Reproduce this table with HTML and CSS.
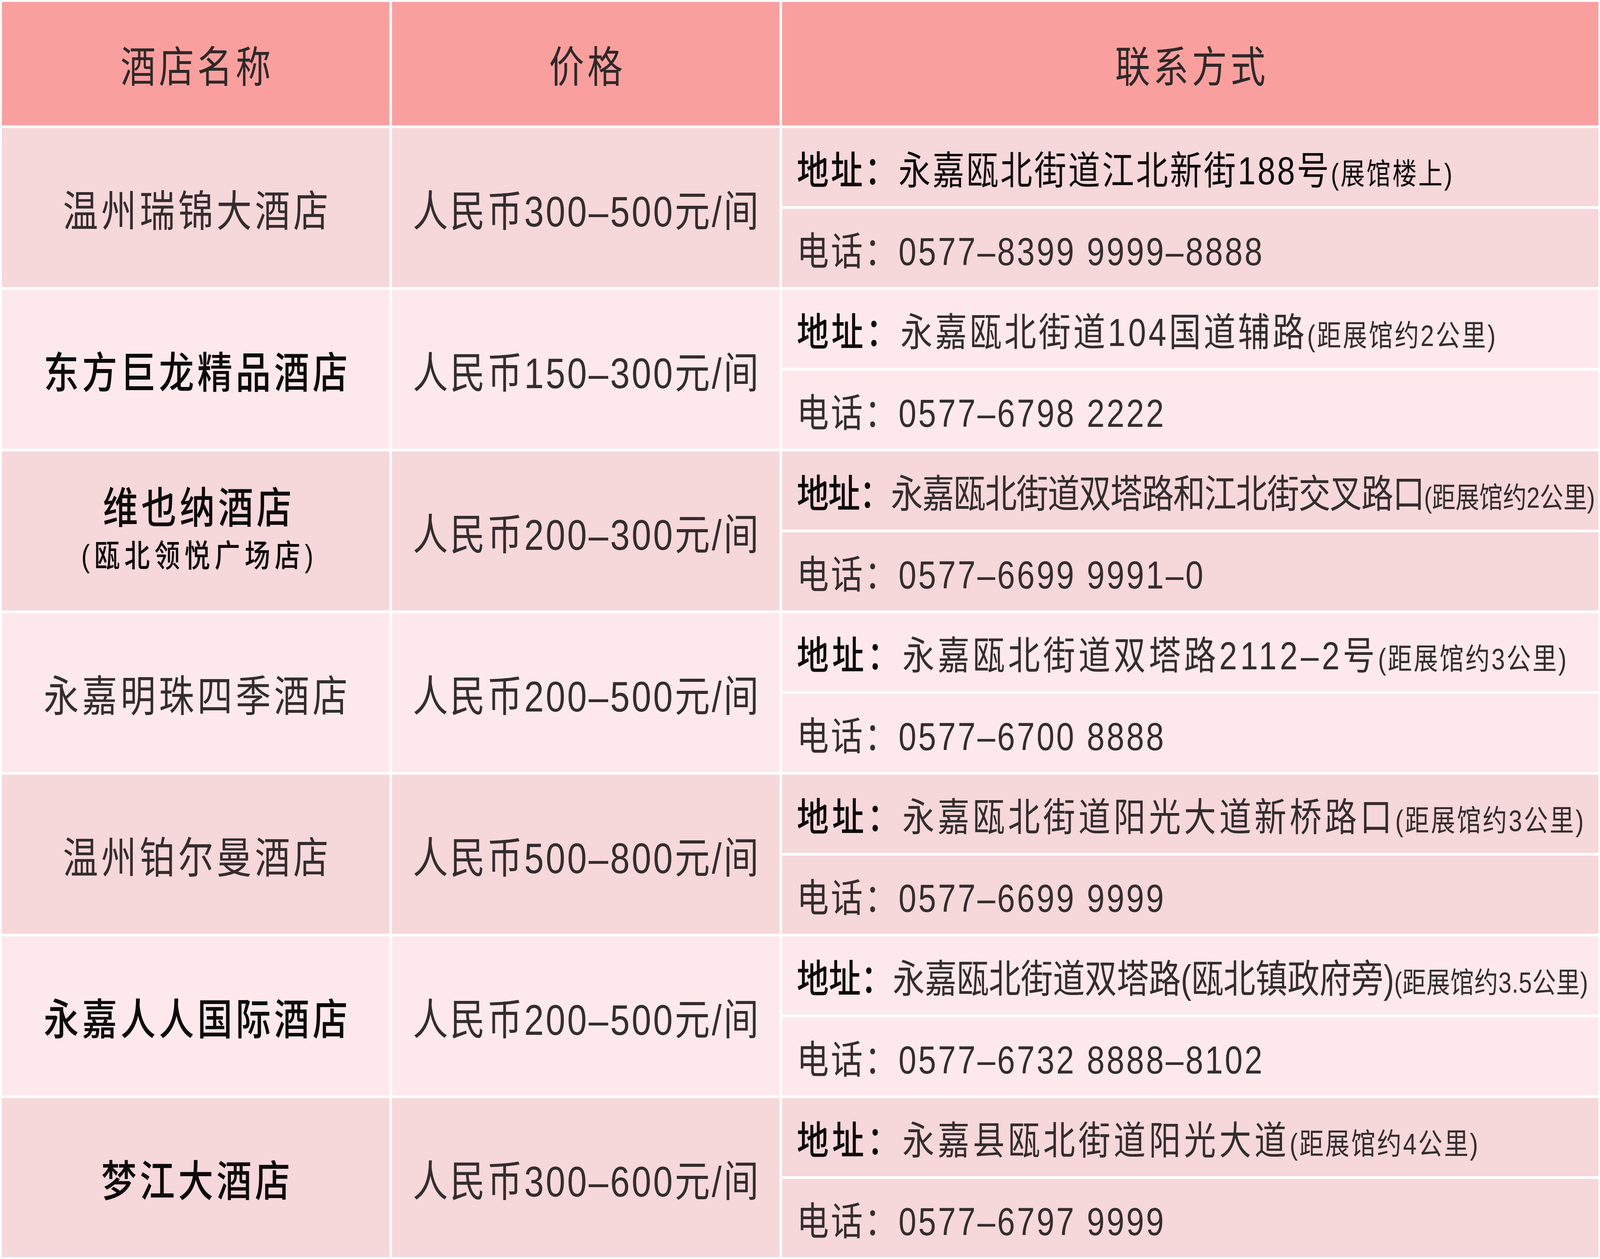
FILE: index.html
```html
<!DOCTYPE html>
<html lang="zh-CN">
<head>
<meta charset="utf-8">
<title>酒店信息</title>
<link rel="stylesheet" href="styles.css">
</head>
<body>
<div class="sheet">
<div class="table">
  <div class="head">酒店名称</div>
  <div class="head">价格</div>
  <div class="head">联系方式</div>

  <div class="row">
    <div class="name">温州瑞锦大酒店</div>
    <div class="price">人民币300–500元/间</div>
    <div class="contact">
      <div class="line dark"><span class="text"><span class="label">地址：</span>永嘉瓯北街道江北新街188号<span class="note">(展馆楼上)</span></span></div>
      <div class="line"><span class="text">电话：0577–8399 9999–8888</span></div>
    </div>
  </div>

  <div class="row alt">
    <div class="name strong">东方巨龙精品酒店</div>
    <div class="price">人民币150–300元/间</div>
    <div class="contact">
      <div class="line roomy"><span class="text"><span class="label">地址：</span>永嘉瓯北街道104国道辅路<span class="note">(距展馆约2公里)</span></span></div>
      <div class="line"><span class="text">电话：0577–6798 2222</span></div>
    </div>
  </div>

  <div class="row">
    <div class="name strong stack">
      <span class="main">维也纳酒店</span>
      <span class="sub">(瓯北领悦广场店)</span>
    </div>
    <div class="price">人民币200–300元/间</div>
    <div class="contact">
      <div class="line tight"><span class="text"><span class="label">地址：</span>永嘉瓯北街道双塔路和江北街交叉路口<span class="note">(距展馆约2公里)</span></span></div>
      <div class="line"><span class="text">电话：0577–6699 9991–0</span></div>
    </div>
  </div>

  <div class="row alt">
    <div class="name">永嘉明珠四季酒店</div>
    <div class="price">人民币200–500元/间</div>
    <div class="contact">
      <div class="line loose"><span class="text"><span class="label">地址：</span>永嘉瓯北街道双塔路2112–2号<span class="note">(距展馆约3公里)</span></span></div>
      <div class="line"><span class="text">电话：0577–6700 8888</span></div>
    </div>
  </div>

  <div class="row">
    <div class="name">温州铂尔曼酒店</div>
    <div class="price">人民币500–800元/间</div>
    <div class="contact">
      <div class="line loose"><span class="text"><span class="label">地址：</span>永嘉瓯北街道阳光大道新桥路口<span class="note">(距展馆约3公里)</span></span></div>
      <div class="line"><span class="text">电话：0577–6699 9999</span></div>
    </div>
  </div>

  <div class="row alt">
    <div class="name strong">永嘉人人国际酒店</div>
    <div class="price">人民币200–500元/间</div>
    <div class="contact">
      <div class="line snug"><span class="text"><span class="label">地址：</span>永嘉瓯北街道双塔路(瓯北镇政府旁)<span class="note">(距展馆约3.5公里)</span></span></div>
      <div class="line"><span class="text">电话：0577–6732 8888–8102</span></div>
    </div>
  </div>

  <div class="row">
    <div class="name strong">梦江大酒店</div>
    <div class="price">人民币300–600元/间</div>
    <div class="contact">
      <div class="line loose"><span class="text"><span class="label">地址：</span>永嘉县瓯北街道阳光大道<span class="note">(距展馆约4公里)</span></span></div>
      <div class="line"><span class="text">电话：0577–6797 9999</span></div>
    </div>
  </div>
</div>
</div>
</body>
</html>
```

FILE: styles.css
```css
html, body {
  margin: 0;
  padding: 0;
  background: #ffffff;
  overflow: hidden;
}

body {
  width: 100%;
  height: 3224px;
  font-family: "Liberation Sans", "Noto Sans CJK SC", sans-serif;
  color: #342d2d;
}

.sheet {
  width: 100%;
  height: 3224px;
  overflow: hidden;
}

/* The table is designed on a 5000px canvas; the window is 4096px wide,
   so the whole sheet is fitted horizontally. */
.table {
  width: 5000px;
  box-sizing: border-box;
  transform: scaleX(0.8192);
  transform-origin: 0 0;
  display: grid;
  grid-template-columns: 1211px 1211px 1fr;
  grid-template-rows: 316px repeat(7, 407px);
  gap: 7px 8px;
  padding: 5px 5px 5px 6px;
}

.head {
  background: #f9a09f;
  display: flex;
  align-items: center;
  justify-content: center;
  font-size: 110px;
  letter-spacing: 10px;
  padding-left: 10px;
  color: #2f2828;
  white-space: nowrap;
}

.row {
  display: contents;
  --bg: #f6d7da;
}

.row.alt {
  --bg: #fde9eb;
}

.name,
.price {
  background: var(--bg);
  display: flex;
  align-items: center;
  justify-content: center;
  white-space: nowrap;
  font-size: 110px;
}

.name {
  letter-spacing: 10px;
  padding-left: 10px;
}

.name.strong {
  color: #0d0a0a;
  font-weight: 500;
}

.name.stack {
  flex-direction: column;
  padding-top: 8px;
}

.name.stack .main {
  line-height: 120px;
  padding-left: 10px;
}

.name.stack .sub {
  font-size: 80px;
  line-height: 124px;
  letter-spacing: 14px;
  padding-left: 14px;
}

.price {
  letter-spacing: 6px;
  padding-left: 6px;
}

.contact {
  display: flex;
  flex-direction: column;
  gap: 7px;
  overflow: hidden;
}

.line {
  flex: 1;
  background: var(--bg);
  display: flex;
  align-items: center;
  padding-left: 46px;
  font-size: 100px;
  letter-spacing: 6px;
  white-space: nowrap;
  overflow: hidden;
}

.line.dark {
  color: #0d0a0a;
}

.line.roomy {
  letter-spacing: 8px;
}

.line.loose {
  letter-spacing: 10px;
}

.line.snug {
  letter-spacing: 0;
}

.line.tight {
  letter-spacing: -2px;
}

.label {
  color: #0d0a0a;
  font-weight: 500;
}

.note {
  font-size: 76px;
  letter-spacing: 5px;
}

.line.snug .note {
  font-size: 74px;
  letter-spacing: 1px;
}

.line.tight .note {
  font-size: 74px;
  letter-spacing: 0;
}
```
